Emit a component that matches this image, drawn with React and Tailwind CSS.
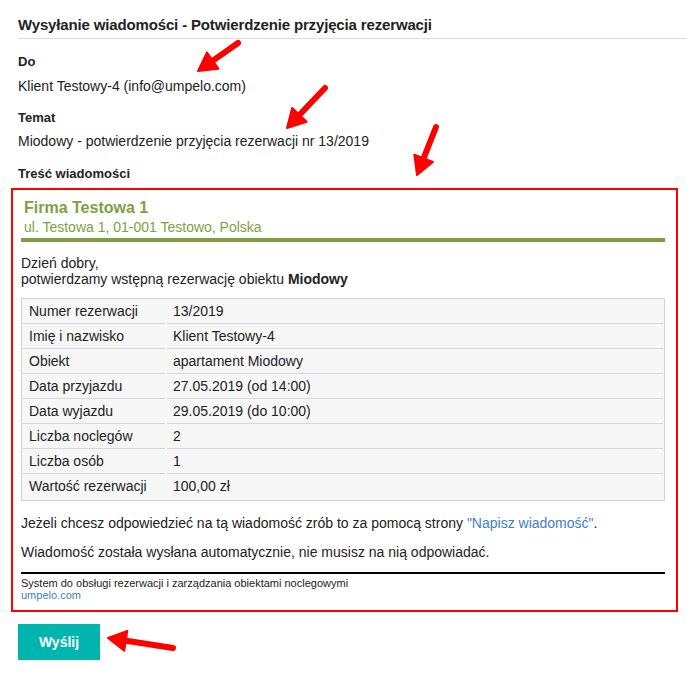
import React from 'react';

const rows = [
  ['Numer rezerwacji', '13/2019'],
  ['Imię i nazwisko', 'Klient Testowy-4'],
  ['Obiekt', 'apartament Miodowy'],
  ['Data przyjazdu', '27.05.2019 (od 14:00)'],
  ['Data wyjazdu', '29.05.2019 (do 10:00)'],
  ['Liczba noclegów', '2'],
  ['Liczba osób', '1'],
  ['Wartość rezerwacji', '100,00 zł'],
];

// red annotation arrows drawn over the page
const arrows = [
  [238, 43, 198, 71],
  [325, 88, 287, 128],
  [436, 127, 417, 175],
  [173, 648, 108, 638],
];

function arrowPoints(x1, y1, x2, y2) {
  const dx = x2 - x1;
  const dy = y2 - y1;
  const len = Math.hypot(dx, dy);
  const ux = dx / len;
  const uy = dy / len;
  const px = -uy;
  const py = ux;
  const headLen = 18;
  const headW = 10;
  const bx = x2 - ux * headLen;
  const by = y2 - uy * headLen;
  return [
    [bx + px * headW, by + py * headW],
    [x2, y2],
    [bx - px * headW, by - py * headW],
  ]
    .map((p) => p.join(','))
    .join(' ');
}

function Arrows() {
  return (
    <svg className="absolute left-0 top-0 pointer-events-none" width="687" height="678">
      {arrows.map(([x1, y1, x2, y2], i) => {
        const len = Math.hypot(x2 - x1, y2 - y1);
        const ex = x2 - ((x2 - x1) / len) * 12;
        const ey = y2 - ((y2 - y1) / len) * 12;
        return (
          <g key={i} fill="#ff0000" stroke="#ff0000">
            <line x1={x1} y1={y1} x2={ex} y2={ey} strokeWidth="6" strokeLinecap="round" />
            <polygon points={arrowPoints(x1, y1, x2, y2)} strokeWidth="2" strokeLinejoin="round" />
          </g>
        );
      })}
    </svg>
  );
}

export default function App() {
  return (
    <div
      className="relative w-[687px] h-[678px] bg-white text-[#222] overflow-hidden"
      style={{ fontFamily: '"Liberation Sans", Arial, sans-serif' }}
    >
      <div className="pl-[18px]">
        <div className="pt-[15px] pb-[3px] border-b border-[#dddddd] text-[15px] leading-[20px] font-bold tracking-[-0.15px]">
          Wysyłanie wiadomości - Potwierdzenie przyjęcia rezerwacji
        </div>

        <div className="mt-[13px] text-[13px] leading-[20px] font-bold">Do</div>
        <div className="mt-[4px] text-[14px] leading-[20px]">Klient Testowy-4 (info@umpelo.com)</div>

        <div className="mt-[12px] text-[13px] leading-[20px] font-bold">Temat</div>
        <div className="mt-[3px] text-[14px] leading-[20px]">
          Miodowy - potwierdzenie przyjęcia rezerwacji nr 13/2019
        </div>

        <div className="mt-[13px] text-[13px] leading-[20px] font-bold">Treść wiadomości</div>
      </div>

      <div className="mt-[4px] ml-[11px] w-[667px] border-2 border-[#ff0000] pl-[8px] pr-[11px] pt-[8px] pb-[9px] text-[14px] text-[#222]">
        <div className="border-b-4 border-[#7ba23f] pb-[2px] pl-[3px] text-[#7ba23f]">
          <div className="text-[16px] leading-[20px] font-bold">Firma Testowa 1</div>
          <div className="leading-[18px]">ul. Testowa 1, 01-001 Testowo, Polska</div>
        </div>

        <div className="mt-[13px] leading-[16px]">
          Dzień dobry,
          <br />
          potwierdzamy wstępną rezerwację obiektu <b>Miodowy</b>
        </div>

        <div className="mt-[11px] border border-[#d3d3d3] bg-[#f7f7f7] px-[1px] pb-[1px]">
          {rows.map(([label, value], i) => (
            <div key={label} className="flex gap-[2px]">
              <div
                className={
                  'w-[142px] h-[25px] pl-[6px] leading-[24px] border-b ' +
                  (i === rows.length - 1 ? 'border-transparent' : 'border-[#d8d8d8]')
                }
              >
                {label}
              </div>
              <div
                className={
                  'flex-1 h-[25px] pl-[6px] leading-[24px] border-b ' +
                  (i === rows.length - 1 ? 'border-transparent' : 'border-[#d8d8d8]')
                }
              >
                {value}
              </div>
            </div>
          ))}
        </div>

        <p className="mt-[12px] leading-[20px]">
          Jeżeli chcesz odpowiedzieć na tą wiadomość zrób to za pomocą strony{' '}
          <span className="text-[#3d7fc6]">"Napisz wiadomość"</span>.
        </p>
        <p className="mt-[9px] leading-[20px]">Wiadomość została wysłana automatycznie, nie musisz na nią odpowiadać.</p>

        <div className="mt-[10px] border-t-2 border-black pt-[3px] text-[11px] leading-[12px] text-[#222]">
          <div>System do obsługi rezerwacji i zarządzania obiektami noclegowymi</div>
          <div className="text-[#3d7fc6]">umpelo.com</div>
        </div>
      </div>

      <div className="pl-[18px] mt-[12px]">
        <button className="w-[82px] h-[36px] bg-[#00b5ad] text-white text-[14px] font-bold">Wyślij</button>
      </div>

      <Arrows />
    </div>
  );
}
